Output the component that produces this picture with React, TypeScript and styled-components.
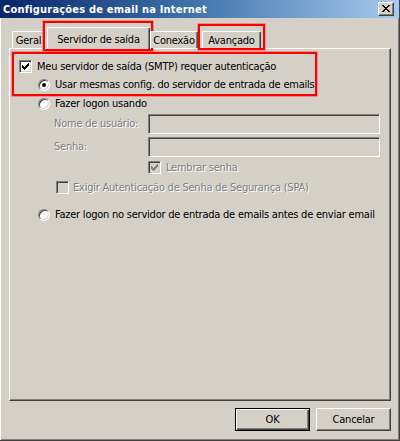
import React from 'react';
import styled, { createGlobalStyle } from 'styled-components';

const Global = createGlobalStyle`
  html, body { margin: 0; padding: 0; background: #d4d0c8; }
  body {
    font-family: "DejaVu Sans Condensed", "DejaVu Sans", sans-serif;
    font-stretch: condensed;
    font-size: 11px;
    letter-spacing: -0.23px;
    color: #000;
  }
`;

const CHECK = ['......#', '.....##', '#...###', '##.###.', '#####..', '.###...', '..#....'];
const CROSS = ['##....##', '.##..##.', '..####..', '...##...', '..####..', '.##..##.', '##....##'];

const Pixels: React.FC<{ rows: string[]; color: string }> = ({ rows, color }) => {
  const w = rows[0].length;
  const h = rows.length;
  const rects: React.ReactNode[] = [];
  rows.forEach((r, y) =>
    r.split('').forEach((c, x) => {
      if (c === '#') rects.push(<rect key={`${x}-${y}`} x={x} y={y} width={1} height={1} />);
    })
  );
  return (
    <svg width={w} height={h} viewBox={`0 0 ${w} ${h}`} shapeRendering="crispEdges" fill={color}>
      {rects}
    </svg>
  );
};

const Window = styled.div`
  width: 400px;
  height: 441px;
  box-sizing: border-box;
  display: flex;
  flex-direction: column;
  background: #d4d0c8;
  border-right: 1px solid #404040;
  border-bottom: 1px solid #404040;
`;

const TitleBar = styled.div`
  height: 18px;
  flex: none;
  display: flex;
  align-items: center;
  justify-content: space-between;
  padding: 0 5px 0 3px;
  background: linear-gradient(90deg, #0a246a 0%, #3a6ea5 45%, #a6caf0 100%);
`;

const Title = styled.span`
  color: #fff;
  font-weight: bold;
  font-size: 11px;
  line-height: 13px;
  letter-spacing: 0.2px;
  white-space: nowrap;
`;

const CloseButton = styled.div`
  width: 16px;
  height: 14px;
  box-sizing: border-box;
  display: flex;
  align-items: center;
  justify-content: center;
  background: #d4d0c8;
  border: 1px solid;
  border-color: #fff #404040 #404040 #fff;
  box-shadow: inset -1px -1px #808080;
  padding: 0 1px 1px 0;
`;

const Body = styled.div`
  flex: 1;
  display: flex;
  flex-direction: column;
  padding: 9px 8px 9px 9px;
  box-shadow: inset 1px 0 #fff, inset -1px -1px #808080;
  min-height: 0;
`;

const TabRow = styled.div`
  display: flex;
  align-items: flex-end;
  padding-left: 3px;
  margin-bottom: -2px;
  position: relative;
  z-index: 1;
  height: 23px;
`;

const Tab = styled.div<{ $selected?: boolean; $width: number; $gap?: number; $mark?: 'sel' | 'adv' }>`
  position: relative;
  box-sizing: border-box;
  width: ${(p) => p.$width}px;
  margin-right: ${(p) => p.$gap ?? 0}px;
  height: ${(p) => (p.$selected ? 23 : 17)}px;
  margin-bottom: ${(p) => (p.$selected ? 0 : 2)}px;
  display: flex;
  align-items: ${(p) => (p.$selected ? 'flex-start' : 'center')};
  padding-top: ${(p) => (p.$selected ? 5 : 0)}px;
  justify-content: center;
  background: #d4d0c8;
  border-top: 1px solid #fff;
  border-left: 1px solid #fff;
  border-right: 1px solid #404040;
  border-radius: 2px 2px 0 0;
  box-shadow: inset -1px 0 #808080;
  font-size: 11px;
  line-height: 13px;
  white-space: nowrap;
  &::after {
    content: '';
    display: ${(p) => (p.$mark ? 'block' : 'none')};
    position: absolute;
    left: ${(p) => (p.$mark === 'sel' ? -5 : -5)}px;
    right: ${(p) => (p.$mark === 'sel' ? -4 : -5)}px;
    top: ${(p) => (p.$mark === 'sel' ? -7 : -8)}px;
    bottom: ${(p) => (p.$mark === 'sel' ? -1 : -2)}px;
    border: 2px solid #ff0000;
    box-shadow: 0 0 0 0.6px rgba(255, 40, 40, 0.6);
    pointer-events: none;
  }
`;

const Panel = styled.div`
  flex: 1;
  box-sizing: border-box;
  display: flex;
  flex-direction: column;
  align-items: flex-start;
  border: 1px solid;
  border-color: #fff #404040 #404040 #fff;
  box-shadow: inset -1px -1px #808080;
`;

const Highlight = styled.div`
  box-sizing: border-box;
  width: 305px;
  margin: 3px 0 0 2px;
  padding: 6px 0 3px 5px;
  border: 2px solid #ff0000;
  box-shadow: 0 0 0 0.6px rgba(255, 40, 40, 0.6);
  display: flex;
  flex-direction: column;
  align-items: flex-start;
`;

const Row = styled.div<{ $top?: number; $left?: number }>`
  display: flex;
  align-items: center;
  height: 13px;
  margin-top: ${(p) => p.$top ?? 0}px;
  margin-left: ${(p) => p.$left ?? 0}px;
  white-space: nowrap;
`;

const Label = styled.span<{ $disabled?: boolean; $gap?: number }>`
  font-size: 11px;
  line-height: 13px;
  margin-left: ${(p) => p.$gap ?? 5}px;
  color: ${(p) => (p.$disabled ? '#808080' : '#000')};
  text-shadow: ${(p) => (p.$disabled ? '1px 1px 0 #fff' : 'none')};
`;

const Box = styled.div<{ $disabled?: boolean }>`
  width: 13px;
  height: 13px;
  box-sizing: border-box;
  flex: none;
  display: flex;
  align-items: center;
  justify-content: center;
  border: 1px solid;
  border-color: #808080 #fff #fff #808080;
  box-shadow: inset 1px 1px #404040, inset -1px -1px #d4d0c8;
  background: ${(p) => (p.$disabled ? '#d4d0c8' : '#fff')};
`;

const Radio = styled.div<{ $on?: boolean }>`
  width: 12px;
  height: 12px;
  box-sizing: border-box;
  flex: none;
  border-radius: 50%;
  border: 1px solid;
  border-color: #808080 #fff #fff #808080;
  box-shadow: inset 1px 1px #404040, inset -1px -1px #d4d0c8;
  background: #fff;
  display: flex;
  align-items: center;
  justify-content: center;
  &::after {
    content: '';
    display: ${(p) => (p.$on ? 'block' : 'none')};
    width: 4px;
    height: 4px;
    border-radius: 50%;
    background: #000;
  }
`;

const FieldRow = styled.div<{ $top: number }>`
  display: flex;
  align-items: center;
  height: 20px;
  margin-top: ${(p) => p.$top}px;
  margin-left: 44px;
`;

const FieldLabel = styled.span`
  width: 94px;
  flex: none;
  font-size: 11px;
  line-height: 13px;
  color: #808080;
  text-shadow: 1px 1px 0 #fff;
  margin-top: -1px;
`;

const Input = styled.div`
  width: 232px;
  height: 20px;
  box-sizing: border-box;
  background: #d4d0c8;
  border: 1px solid;
  border-color: #808080 #fff #fff #808080;
  box-shadow: inset 1px 1px #404040, inset -1px -1px #d4d0c8;
`;

const Footer = styled.div`
  display: flex;
  justify-content: flex-end;
  gap: 6px;
  margin-top: 7px;
  flex: none;
`;

const Button = styled.div<{ $default?: boolean }>`
  width: 75px;
  height: 23px;
  box-sizing: border-box;
  display: flex;
  align-items: center;
  justify-content: center;
  font-size: 11px;
  background: #d4d0c8;
  border: 1px solid;
  border-color: ${(p) => (p.$default ? '#000' : '#fff #404040 #404040 #fff')};
  box-shadow: ${(p) =>
    p.$default
      ? 'inset 1px 1px #fff, inset -1px -1px #404040, inset -2px -2px #808080'
      : 'inset -1px -1px #808080'};
`;

export default function App() {
  return (
    <>
      <Global />
      <Window>
        <TitleBar>
          <Title>Configurações de email na Internet</Title>
          <CloseButton>
            <Pixels rows={CROSS} color="#000" />
          </CloseButton>
        </TitleBar>
        <Body>
          <TabRow>
            <Tab $width={33} $gap={2}>Geral</Tab>
            <Tab $width={103} $selected $mark="sel">Servidor de saída</Tab>
            <Tab $width={48} $gap={4}>Conexão</Tab>
            <Tab $width={59} $mark="adv">Avançado</Tab>
          </TabRow>
          <Panel>
            <Highlight>
              <Row>
                <Box>
                  <Pixels rows={CHECK} color="#000" />
                </Box>
                <Label>Meu servidor de saída (SMTP) requer autenticação</Label>
              </Row>
              <Row $top={5} $left={19}>
                <Radio $on />
                <Label>Usar mesmas config. do servidor de entrada de emails</Label>
              </Row>
            </Highlight>
            <Row $top={1} $left={28}>
              <Radio />
              <Label>Fazer logon usando</Label>
            </Row>
            <FieldRow $top={4}>
              <FieldLabel>Nome de usuário:</FieldLabel>
              <Input />
            </FieldRow>
            <FieldRow $top={3}>
              <FieldLabel>Senha:</FieldLabel>
              <Input />
            </FieldRow>
            <Row $top={4} $left={138}>
              <Box $disabled>
                <Pixels rows={CHECK} color="#808080" />
              </Box>
              <Label $disabled>Lembrar senha</Label>
            </Row>
            <Row $top={7} $left={46}>
              <Box $disabled />
              <Label $disabled $gap={4}>Exigir Autenticação de Senha de Segurança (SPA)</Label>
            </Row>
            <Row $top={14} $left={28}>
              <Radio />
              <Label>Fazer logon no servidor de entrada de emails antes de enviar email</Label>
            </Row>
          </Panel>
          <Footer>
            <Button $default>OK</Button>
            <Button>Cancelar</Button>
          </Footer>
        </Body>
      </Window>
    </>
  );
}
